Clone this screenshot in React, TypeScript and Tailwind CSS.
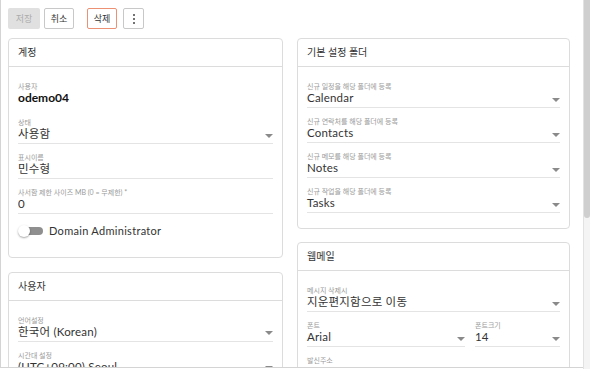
import type { ReactNode } from "react";

const FONT = { fontFamily: "Lato, 'Noto Sans CJK KR', sans-serif" };

function Arrow() {
  return (
    <span className="ml-2 mt-[3px] h-0 w-0 border-l-[4px] border-r-[4px] border-t-[4px] border-l-transparent border-r-transparent border-t-[#8a8a8a]" />
  );
}

function Field({
  label,
  value,
  select = false,
  underline = true,
  bold = false,
}: {
  label: string;
  value: string;
  select?: boolean;
  underline?: boolean;
  bold?: boolean;
}) {
  return (
    <div className={underline ? "mb-[9px]" : "mb-[11px]"}>
      <div className="text-[7px] leading-[9px] text-[#9a9a9a]">{label}</div>
      <div
        className={`flex items-center justify-between pb-[2px] ${
          underline ? "border-b border-[#e4e4e4]" : ""
        }`}
      >
        <span
          className={
            bold
              ? "text-[12px] font-bold leading-[14px] text-[#111]"
              : "text-[11.5px] leading-[14px] tracking-[0.2px] text-[#333]"
          }
        >
          {value}
        </span>
        {select && <Arrow />}
      </div>
    </div>
  );
}

function Card({ title, children }: { title: string; children: ReactNode }) {
  return (
    <section className="rounded-[4px] border border-[#dcdcdc] bg-white">
      <div className="flex h-[28px] items-center border-b border-[#dcdcdc] px-[9px] text-[10px] text-[#333]">
        {title}
      </div>
      <div className="px-[9px] pb-[6px] pt-[15px]">{children}</div>
    </section>
  );
}

export default function App() {
  return (
    <div className="flex h-[369px] w-[590px] overflow-hidden bg-white" style={FONT}>
      <main className="h-[368px] flex-1 overflow-hidden border-b border-l border-[#d4d4d4]">
        {/* Toolbar */}
        <div className="flex items-center px-[7px] pt-[8px] text-[9px]">
          <button
            type="button"
            disabled
            className="h-[21px] w-[32px] rounded-[2px] bg-[#e0e0e0] text-[#ababab]"
          >
            저장
          </button>
          <button
            type="button"
            className="ml-[4px] h-[21px] w-[30px] rounded-[2px] border border-[#c8c8c8] bg-white text-[#333]"
          >
            취소
          </button>
          <button
            type="button"
            className="ml-[13px] h-[21px] w-[30px] rounded-[2px] border border-[#ec9173] bg-white text-[#333]"
          >
            삭제
          </button>
          <button
            type="button"
            className="ml-[6px] flex h-[21px] w-[21px] flex-col items-center justify-center gap-[2px] rounded-[2px] border border-[#c8c8c8] bg-white"
          >
            <span className="h-[2px] w-[2px] rounded-full bg-[#444]" />
            <span className="h-[2px] w-[2px] rounded-full bg-[#444]" />
            <span className="h-[2px] w-[2px] rounded-full bg-[#444]" />
          </button>
        </div>

        {/* Columns */}
        <div className="mt-[9px] grid grid-cols-[275px_273px] gap-[14px] px-[7px]">
          <div className="flex flex-col gap-[14px]">
            <Card title="계정">
              <Field label="사용자" value="odemo04" underline={false} bold />
              <Field label="상태" value="사용함" select />
              <Field label="표시이름" value="민수형" />
              <Field label="사서함 제한 사이즈 MB (0 = 무제한) *" value="0" />
              <div className="mb-[11px] mt-[8px] flex items-center">
                <span className="relative flex h-[12px] w-[26px] items-center">
                  <span className="ml-[3px] h-[8px] w-[22px] rounded-full bg-[#8f8f8f]" />
                  <span className="absolute left-0 top-0 h-[12px] w-[12px] rounded-full bg-white shadow-[0_1px_2px_rgba(0,0,0,0.35)]" />
                </span>
                <span className="ml-[5px] text-[11px] tracking-[0.3px] text-[#333]">
                  Domain Administrator
                </span>
              </div>
            </Card>
            <Card title="사용자">
              <Field label="언어설정" value="한국어 (Korean)" select />
              <Field label="시간대 설정" value="(UTC+09:00) Seoul" select />
            </Card>
          </div>

          <div className="flex flex-col gap-[13px]">
            <Card title="기본 설정 폴더">
              <Field label="신규 일정을 해당 폴더에 등록" value="Calendar" select />
              <Field label="신규 연락처를 해당 폴더에 등록" value="Contacts" select />
              <Field label="신규 메모를 해당 폴더에 등록" value="Notes" select />
              <Field label="신규 작업을 해당 폴더에 등록" value="Tasks" select />
            </Card>
            <Card title="웹메일">
              <Field label="메시지 삭제시" value="지운편지함으로 이동" select />
              <div className="grid grid-cols-[158px_85px] gap-[10px]">
                <Field label="폰트" value="Arial" select />
                <Field label="폰트크기" value="14" select />
              </div>
              <Field label="발신주소" value="odemo04@smartertools.co.kr" />
            </Card>
          </div>
        </div>
      </main>

      {/* Scrollbar */}
      <div className="flex w-[7px] flex-col border-l border-[#e2e2e2] bg-[#f4f4f4]">
        <div className="h-[218px] rounded-b-[3px] bg-[#cfcfcf]" />
      </div>
    </div>
  );
}
